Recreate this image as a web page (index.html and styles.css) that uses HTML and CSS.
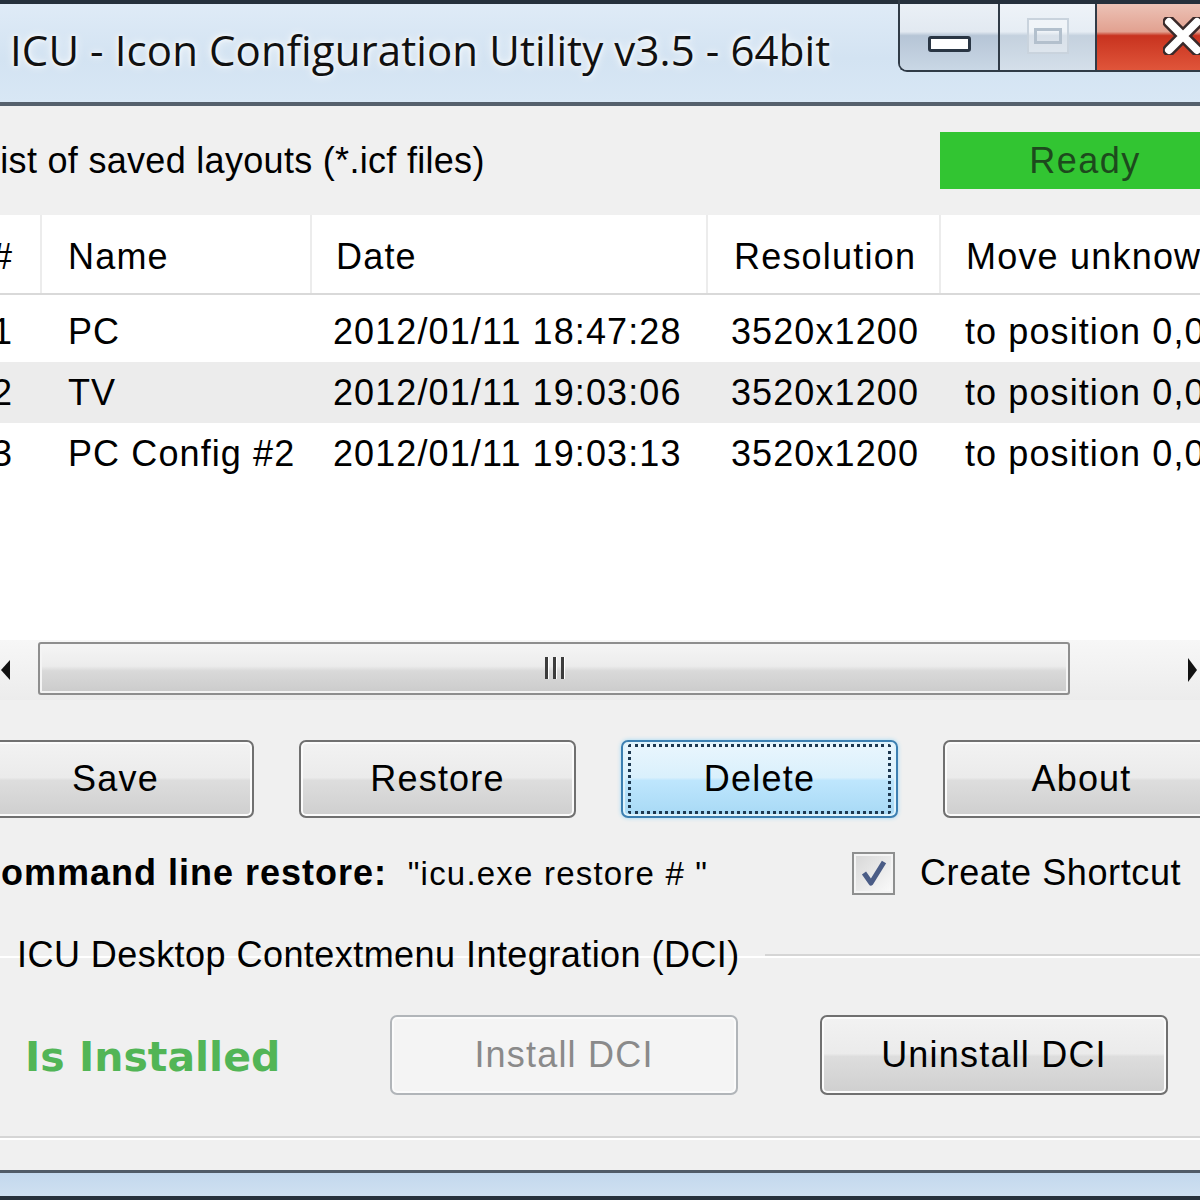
FILE: index.html
```html
<!DOCTYPE html>
<html lang="en">
<head>
    <meta charset="UTF-8">
    <title>ICU - Icon Configuration Utility v3.5 - 64bit</title>

    <link rel="stylesheet" href="styles.css">

</head>
<body>

<div class="window">

    <div class="titlebar">
        <div class="title">ICU - Icon Configuration Utility v3.5 - 64bit</div>
        <div class="caption">
            <span class="cap cap-min"><i class="glyph-min"></i></span>
            <span class="cap cap-max"><i class="glyph-max"><b></b></i></span>
            <span class="cap cap-close">
                <svg class="glyph-close" width="40" height="38" viewBox="0 0 40 38">
                    <path d="M6 5 L34 33 M34 5 L6 33" stroke="#3a2a2a" stroke-width="13" stroke-linecap="round"/>
                    <path d="M6 5 L34 33 M34 5 L6 33" stroke="#fff" stroke-width="8" stroke-linecap="round"/>
                </svg>
            </span>
        </div>
    </div>

    <div class="client">

        <div class="list_head">
            <span>List of saved layouts (*.icf files)</span>
            <div class="status">Ready</div>
        </div>

        <div class="listview">
            <div class="lv_row lv_header">
                <div>#</div>
                <div>Name</div>
                <div>Date</div>
                <div>Resolution</div>
                <div>Move unknown icons</div>
            </div>
            <div class="lv_body">
                <div class="lv_row">
                    <div>1</div>
                    <div>PC</div>
                    <div>2012/01/11 18:47:28</div>
                    <div>3520x1200</div>
                    <div>to position 0,0</div>
                </div>
                <div class="lv_row lv_row-hot">
                    <div>2</div>
                    <div>TV</div>
                    <div>2012/01/11 19:03:06</div>
                    <div>3520x1200</div>
                    <div>to position 0,0</div>
                </div>
                <div class="lv_row">
                    <div>3</div>
                    <div>PC Config #2</div>
                    <div>2012/01/11 19:03:13</div>
                    <div>3520x1200</div>
                    <div>to position 0,0</div>
                </div>
            </div>
            <div class="hscroll">
                <div class="hs_btn hs_left"><i></i></div>
                <div class="hs_thumb"><i></i><i></i><i></i></div>
                <div class="hs_track"></div>
                <div class="hs_btn hs_right"><i></i></div>
            </div>
        </div>

        <div class="btn_row">
            <button class="btn">Save</button>
            <button class="btn">Restore</button>
            <button class="btn btn-focus"><span>Delete</span></button>
            <button class="btn">About</button>
        </div>

        <div class="cmd_row">
            <div class="cmd">
                <b>Command line restore:</b>
                <span>"icu.exe restore # "</span>
            </div>
            <label class="check">
                <span class="check_box">
                    <svg width="30" height="30" viewBox="0 0 30 30">
                        <path d="M5 15 L12 25 L25 4" fill="none" stroke="#4a5c86" stroke-width="5" stroke-linejoin="round"/>
                    </svg>
                </span>
                Create Shortcut
            </label>
        </div>

        <fieldset class="group">
            <legend>ICU Desktop Contextmenu Integration (DCI)</legend>
            <div class="group_row">
                <span class="installed">Is Installed</span>
                <button class="btn btn-wide" disabled>Install DCI</button>
                <button class="btn btn-wide">Uninstall DCI</button>
            </div>
        </fieldset>

    </div>

    <div class="frame_bottom"></div>

</div>

</body>
</html>
```

FILE: styles.css
```css
body {
    margin: 0;
    width: 1200px;
    height: 1200px;
    overflow: hidden;
    background: #f0f0f0;
    font-family: "Liberation Sans", Arial, sans-serif;
    font-size: 36px;
    letter-spacing: .6px;
    color: #000;
}

.window {
    width: 1260px;
    margin-left: -30px;
}

/* title bar */

.titlebar {
    height: 98px;
    display: flex;
    border-top: 4px solid #25303c;
    border-bottom: 4px solid #55606c;
    background: linear-gradient(#dfebf7, #d3e3f2 55%, #d8e7f5);
}

.titlebar .title {
    flex: 1;
    padding: 17px 0 0 40px;
    font-family: "Open Sans", "Noto Sans", sans-serif;
    font-size: 42px;
    letter-spacing: .1px;
    color: #111;
    text-shadow: 0 0 10px #fff, 0 0 4px #fff;
    white-space: nowrap;
}

.caption {
    display: flex;
    height: 66px;
    margin-top: -4px;
    padding-top: 4px;
    border-left: 2px solid #303b47;
    border-bottom: 2px solid #303b47;
    border-bottom-left-radius: 9px;
    overflow: hidden;
}

.caption .cap {
    display: flex;
    align-items: center;
    justify-content: center;
    height: 100%;
}

.cap-min {
    width: 98px;
    background: linear-gradient(#eaf0f6, #e2e9f1 42%, #b6c5d6 48%, #c9d7e5);
}

.cap-max {
    width: 95px;
    border-left: 2px solid #303b47;
    background: linear-gradient(#eef3f8, #e6edf4 42%, #c4d1de 48%, #d4dfea);
}

.cap-close {
    width: 133px;
    border-left: 2px solid #303b47;
    background: linear-gradient(#ecc2b6, #e2a190 42%, #c8331f 48%, #e0553a);
    justify-content: flex-start !important;
}

.glyph-min {
    width: 37px;
    height: 10px;
    margin-top: 14px;
    border: 3px solid #2a3644;
    border-radius: 3px;
    background: #fff;
}

.glyph-max {
    display: flex;
    align-items: center;
    justify-content: center;
    width: 38px;
    height: 32px;
    margin-top: -2px;
    border: 2px solid #c9d3dd;
    background: rgba(255, 255, 255, .35);
}

.glyph-max b {
    width: 22px;
    height: 10px;
    border: 3px solid #b3c0cd;
}

.glyph-close {
    margin: -2px 0 0 66px;
}

/* client */

.list_head {
    height: 109px;
    display: flex;
    align-items: center;
    padding-left: 10px;
    letter-spacing: .3px;
}

.list_head .status {
    width: 290px;
    height: 57px;
    margin-left: auto;
    display: flex;
    align-items: center;
    justify-content: center;
    background: #32c532;
    color: #1d4a1d;
    letter-spacing: 1.5px;
}

/* list view */

.listview {
    height: 485px;
    display: flex;
    flex-direction: column;
    background: #fff;
}

.lv_row {
    display: grid;
    grid-template-columns: 72px 270px 396px 233px 1fr;
    align-items: center;
    height: 61px;
    white-space: nowrap;
    letter-spacing: 1.1px;
}

.lv_row div:nth-child(1) { padding-left: 22px; }
.lv_row div:nth-child(2) { padding-left: 26px; }
.lv_row div:nth-child(3) { padding-left: 21px; }
.lv_row div:nth-child(4) { padding-left: 23px; }
.lv_row div:nth-child(5) { padding-left: 24px; }

.lv_header {
    height: 78px;
    border-bottom: 2px solid #d9d9d9;
    align-items: stretch;
    letter-spacing: 1.2px;
}

.lv_header div {
    display: flex;
    align-items: center;
    padding-top: 6px;
    border-right: 2px solid #ececec;
}

.lv_header div:nth-child(3) { padding-left: 24px; }
.lv_header div:nth-child(4) { padding-left: 26px; }
.lv_header div:nth-child(5) { padding-left: 25px; }

.lv_body {
    flex: 1;
    padding-top: 6px;
}

.lv_row-hot {
    background: #ececec;
}

.hscroll {
    height: 60px;
    display: flex;
    align-items: center;
    background: linear-gradient(#f7f7f7, #ececec);
}

.hs_btn {
    height: 100%;
    display: flex;
    align-items: center;
}

.hs_left {
    width: 68px;
    justify-content: flex-end;
    padding-right: 28px;
    box-sizing: border-box;
}

.hs_left i {
    border-right: 9px solid #111;
    border-top: 10px solid transparent;
    border-bottom: 10px solid transparent;
}

.hs_thumb {
    width: 1028px;
    height: 49px;
    margin-top: -4px;
    display: flex;
    justify-content: center;
    align-items: center;
    gap: 5px;
    border: 2px solid #8e8e8e;
    border-radius: 3px;
    background: linear-gradient(#f5f5f5, #ececec 45%, #d9d9d9 55%, #cbcbcb);
    box-shadow: inset 0 0 0 2px #f4f4f4;
}

.hs_thumb i {
    width: 3px;
    height: 22px;
    background: #3c3c3c;
    box-shadow: 1px 0 0 #fff;
}

.hs_track {
    width: 110px;
}

.hs_right {
    padding-left: 8px;
}

.hs_right i {
    border-left: 9px solid #111;
    border-top: 12px solid transparent;
    border-bottom: 12px solid transparent;
}

/* buttons */

.btn {
    font: inherit;
    letter-spacing: 1.2px;
    color: #000;
    width: 277px;
    height: 78px;
    padding: 0;
    border: 2px solid #707070;
    border-radius: 7px;
    background: linear-gradient(#f2f2f2, #ebebeb 48%, #dddddd 52%, #cfcfcf);
    box-shadow: inset 0 0 0 2px #fbfbfb;
}

.btn-focus {
    border-color: #3c7fb1;
    background: linear-gradient(#eaf6fd, #d9f0fc 48%, #bee6fd 52%, #a7d9f5);
    box-shadow: inset 0 0 0 2px #dff3fc, 0 0 4px #9ed8f5;
}

.btn-focus span {
    display: flex;
    align-items: center;
    justify-content: center;
    margin: 0 5px;
    height: 64px;
    border: 3px dotted #1d3850;
    border-radius: 3px;
}

.btn:disabled {
    color: #8a8a8a;
    border-color: #b1b5b9;
    background: #f4f4f4;
}

.btn_row {
    display: flex;
    gap: 45px;
    margin-top: 40px;
    padding-left: 7px;
}

.cmd_row {
    height: 110px;
    display: grid;
    grid-template-columns: 882px 1fr;
    align-items: center;
}

.cmd {
    padding-left: 4px;
    white-space: nowrap;
}

.cmd b {
    letter-spacing: 1px;
    margin-right: 10px;
}

.cmd span {
    font-size: 33px;
    letter-spacing: 1.2px;
}

.check {
    display: flex;
    align-items: center;
    gap: 25px;
    letter-spacing: .6px;
}

.check_box {
    width: 39px;
    height: 39px;
    display: flex;
    align-items: center;
    justify-content: center;
    border: 2px solid #8e8f8f;
    background: linear-gradient(135deg, #d6d6d6, #fbfbfb);
    box-shadow: inset 0 0 0 2px #f4f4f4;
}

/* group box */

.group {
    margin: 0 0 32px 20px;
    padding: 0;
    border: 2px solid #d5d5d5;
    border-radius: 4px;
    box-shadow: 0 2px 0 #fff, inset 0 2px 0 #fff;
}

.group legend {
    padding: 0 25px 0 25px;
    line-height: 54px;
    letter-spacing: .45px;
}

.group_row {
    display: flex;
    align-items: center;
    padding: 33px 0 41px 33px;
}

.installed {
    width: 365px;
    margin-top: 4px;
    font-family: "DejaVu Sans", sans-serif;
    font-weight: bold;
    font-size: 41px;
    letter-spacing: 0;
    color: #52b556;
}

.btn-wide {
    width: 348px;
    height: 80px;
    margin-right: 82px;
}

.frame_bottom {
    height: 23px;
    border-top: 3px solid #505b67;
    border-bottom: 4px solid #27313c;
    background: linear-gradient(#c3d8ed, #cfe0f1);
}
```
